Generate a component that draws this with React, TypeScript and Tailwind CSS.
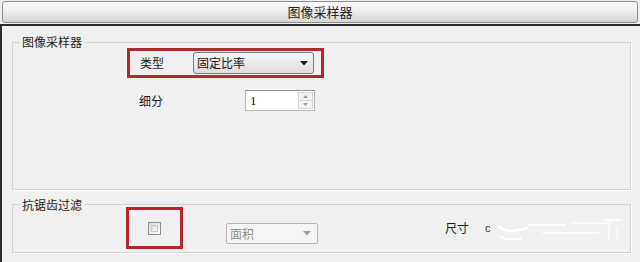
import React from "react";

const cjk = "font-['Noto_Sans_CJK_SC','Noto_Sans',sans-serif]";

function ComboArrow({ color = "#111" }: { color?: string }) {
  return (
    <svg width="8" height="5" viewBox="0 0 8 5" className="shrink-0">
      <path d="M0 0 H8 L4 4.5 Z" fill={color} />
    </svg>
  );
}

function SpinBox() {
  return (
    <div className="flex w-[70px] h-[21px] border border-[#b3b6bd] border-t-[#8f949c] bg-white">
      <span className="flex-1 pl-[4px] leading-[19px] text-[13px] text-[#111] font-['Liberation_Serif',serif]">
        1
      </span>
      <div className="flex flex-col w-[15px] my-[1px] mr-[1px] border border-[#d2d2d2] bg-[#f3f3f3]">
        <div className="flex-1 flex items-center justify-center border-b border-[#d9d9d9]">
          <svg width="5" height="3" viewBox="0 0 5 3">
            <path d="M0 3 L2.5 0 L5 3 Z" fill="#9a9a9a" />
          </svg>
        </div>
        <div className="flex-1 flex items-center justify-center">
          <svg width="5" height="3" viewBox="0 0 5 3">
            <path d="M0 0 H5 L2.5 3 Z" fill="#9a9a9a" />
          </svg>
        </div>
      </div>
    </div>
  );
}

export default function App() {
  return (
    <div className={`w-[640px] h-[262px] overflow-hidden bg-[#f0f0f0] text-[12px] text-[#1b1b1b] ${cjk}`}>
      {/* 标题栏 */}
      <div className="h-[24px] pt-[1px] px-[2px]">
        <div className="h-[22px] flex items-center justify-center rounded-[3px] border border-[#8c8c8c] bg-gradient-to-b from-[#fcfcfc] via-[#ececec] to-[#d6d6d6] text-[13px] text-[#222]">
          图像采样器
        </div>
      </div>

      <div className="h-[238px] border-t-2 border-l-2 border-[#2b2b2b] pl-[10px]">
        {/* 图像采样器 */}
        <div className="relative mt-[16px] w-[619px] h-[148px] border border-[#d2d2d2] shadow-[1px_1px_0_#ffffff]">
          <span className="absolute -top-[10px] left-[7px] px-[2px] leading-[18px] bg-[#f0f0f0]">
            图像采样器
          </span>

          <div className="ml-[114px] mt-[5px] w-[197px] h-[30px] border-[3px] border-[#b8262d] flex items-center pl-[10px]">
            <span className="w-[53px] leading-[18px]">类型</span>
            <div className="w-[121px] h-[22px] flex items-center justify-between pl-[3px] pr-[5px] rounded-[3px] border border-[#7a7a7a] bg-gradient-to-b from-[#f6f6f6] to-[#dedede]">
              <span className="leading-[18px] text-[#111]">固定比率</span>
              <ComboArrow />
            </div>
          </div>

          <div className="flex items-center ml-[126px] mt-[12px]">
            <span className="w-[106px] leading-[18px]">细分</span>
            <SpinBox />
          </div>
        </div>

        {/* 抗锯齿过滤 */}
        <div className="relative mt-[14px] w-[619px] h-[49px] border border-[#d2d2d2] shadow-[1px_1px_0_#ffffff] flex items-start">
          <span className="absolute -top-[9px] left-[7px] px-[2px] leading-[18px] bg-[#f0f0f0]">
            抗锯齿过滤
          </span>

          <div className="ml-[113px] mt-[2px] w-[57px] h-[42px] border-[3px] border-[#b8262d] flex items-center justify-center">
            <div className="w-[13px] h-[13px] border border-[#8e8f8f] bg-gradient-to-br from-[#dcdcdc] to-[#fafafa] p-[2px]">
              <div className="w-full h-full border border-[#c9c9c9] bg-gradient-to-br from-[#e0e0e0] to-[#f4f4f4]" />
            </div>
          </div>

          <div className="ml-[43px] mt-[18px] w-[92px] h-[21px] flex items-center justify-between pl-[3px] pr-[6px] rounded-[2px] border border-[#b5b5b5] bg-[#f5f5f5]">
            <span className="leading-[18px] text-[#8d8d8d]">面积</span>
            <ComboArrow color="#9c9c9c" />
          </div>

          <span className="ml-[127px] mt-[14px] leading-[18px]">尺寸</span>
          <span className="ml-[16px] mt-[14px] leading-[18px] text-[11px] text-[#333] font-['Liberation_Sans',sans-serif]">
            c
          </span>
          <svg width="130" height="34" viewBox="0 0 130 34" className="mt-[6px] ml-[4px]">
            <g stroke="#ffffff" strokeLinecap="round" fill="none">
              <path d="M4 16 C12 22 22 20 32 17" strokeWidth="2.5" />
              <path d="M6 26 C14 30 20 29 26 27" strokeWidth="2" />
              <path d="M34 14 H70" strokeWidth="2" />
              <path d="M48 22 H104" strokeWidth="1.5" />
              <path d="M76 12 H118" strokeWidth="1.2" />
              <path d="M108 9 H126" strokeWidth="1.5" />
              <path d="M114 14 V30" strokeWidth="1.2" />
              <path d="M122 16 V28" strokeWidth="1" />
            </g>
          </svg>
        </div>
      </div>
    </div>
  );
}
